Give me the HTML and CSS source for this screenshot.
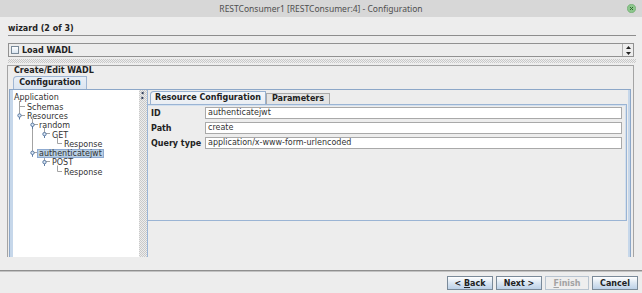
FILE: index.html
```html
<!DOCTYPE html>
<html lang="en">
<head>
    <meta charset="UTF-8">
    <title>RESTConsumer1 [RESTConsumer:4] - Configuration</title>
    <link rel="stylesheet" href="styles.css">
</head>
<body>
    <div class="titlebar">
        <span></span>
        <span class="title">RESTConsumer1 [RESTConsumer:4] - Configuration</span>
        <span class="close">
            <svg width="9" height="9" viewBox="0 0 9 9">
                <circle cx="4.5" cy="4.5" r="4.2" fill="#8cc68c" stroke="#6aa86a" stroke-width="0.6"/>
                <path d="M3 3 L6 6 M6 3 L3 6" stroke="#2f6a2f" stroke-width="1"/>
            </svg>
        </span>
    </div>

    <div class="step">wizard (2 of 3)</div>

    <div class="load">
        <span class="check"></span>
        <span class="load-label">Load WADL</span>
        <span class="spin">
            <svg width="5" height="3" viewBox="0 0 5 3"><path d="M2.5 0 L5 3 L0 3 Z" fill="#222"/></svg>
            <svg width="5" height="3" viewBox="0 0 5 3"><path d="M0 0 L5 0 L2.5 3 Z" fill="#222"/></svg>
        </span>
    </div>

    <div class="hsplit"></div>

    <div class="group">
        <div class="group-title">Create/Edit WADL</div>
        <div class="tabs">
            <span class="tab outer-tab">Configuration</span>
        </div>
        <div class="tab-body">
            <div class="tree">
                <!-- connector lines and expand handles -->
                <svg class="tree-lines" width="126" height="100" viewBox="0 0 126 100">
                    <g stroke="#a3a3a3" stroke-width="1" fill="none">
                        <path d="M6.5 11 V24 M6.5 16.5 H12 M8 25.5 H12"/>
                        <path d="M19.5 29 V62 M21 34.5 H25 M21 62.5 H25"/>
                        <path d="M31.5 38 V43 M33 43.5 H37 M31.5 66 V71 M33 71.5 H37"/>
                        <path d="M44.5 47.5 V53.5 H49 M44.5 75.5 V81.5 H49"/>
                    </g>
                    <g stroke="#4d6e9a" stroke-width="0.9" fill="#d9e6f4">
                        <circle cx="6.5" cy="25.5" r="1.7"/>
                        <circle cx="19.5" cy="34.8" r="1.7"/>
                        <circle cx="19.5" cy="62.8" r="1.7"/>
                        <circle cx="31.5" cy="44.1" r="1.7"/>
                        <circle cx="31.5" cy="72.1" r="1.7"/>
                        <path d="M6.5 27.2 V29.5 M19.5 36.5 V38.8 M19.5 64.5 V66.8 M31.5 45.8 V48 M31.5 73.8 V76" fill="none"/>
                    </g>
                </svg>
                <div class="node lvl0"><span class="label">Application</span></div>
                <div class="node lvl1"><span class="label">Schemas</span></div>
                <div class="node lvl1"><span class="label">Resources</span></div>
                <div class="node lvl2"><span class="label">random</span></div>
                <div class="node lvl3"><span class="label">GET</span></div>
                <div class="node lvl4"><span class="label">Response</span></div>
                <div class="node lvl2"><span class="label selected">authenticatejwt</span></div>
                <div class="node lvl3"><span class="label">POST</span></div>
                <div class="node lvl4"><span class="label">Response</span></div>
            </div>

            <div class="vsplit">
                <svg width="8" height="12" viewBox="0 0 8 12">
                    <path d="M4.5 1.5 L2 3 L4.5 4.5 Z" fill="#1d2d4d"/>
                    <path d="M2.5 6.5 L5 8 L2.5 9.5 Z" fill="#1d2d4d"/>
                </svg>
            </div>

            <div class="detail">
                <div class="tabs inner-tabs">
                    <span class="tab inner-tab selected">Resource Configuration</span>
                    <span class="tab inner-tab">Parameters</span>
                </div>
                <div class="panel">
                    <div class="form">
                        <span class="form-label">ID</span>
                        <span class="field">authenticatejwt</span>
                        <span class="form-label">Path</span>
                        <span class="field">create</span>
                        <span class="form-label">Query type</span>
                        <span class="field">application/x-www-form-urlencoded</span>
                    </div>
                </div>
            </div>
        </div>
    </div>

    <div class="footer">
        <button class="btn">&lt; <u>B</u>ack</button>
        <button class="btn">Next &gt;</button>
        <button class="btn" disabled><u>F</u>inish</button>
        <button class="btn">Cancel</button>
    </div>
</body>
</html>
```

FILE: styles.css
```css
* {
    box-sizing: border-box;
}
body {
    margin: 0;
    width: 642px;
    height: 293px;
    overflow: hidden;
    background-color: #ededed;
    font-family: "DejaVu Sans", sans-serif;
    font-size: 8px;
    color: #333;
}
.titlebar {
    height: 17px;
    background-color: #d7d7d7;
    display: grid;
    grid-template-columns: 1fr auto 1fr;
    align-items: center;
    font-family: "Noto Sans", sans-serif;
    font-size: 8.5px;
    color: #4f4f4f;
}
.close {
    justify-self: end;
    margin-right: 6px;
    height: 9px;
}
.step {
    margin: 0 6px 0 8px;
    height: 19px;
    padding-top: 6px;
    line-height: 12px;
    border-bottom: 1px solid #8d8d8d;
    font-weight: bold;
    color: #222;
}
.load {
    margin: 7px 8px 0 8px;
    height: 14px;
    border: 1px solid #919191;
    display: flex;
    align-items: center;
}
.check {
    width: 8px;
    height: 8px;
    margin-left: 2px;
    border: 1px solid #7a8a99;
    background: linear-gradient(#ffffff, #d9e5f1);
}
.load-label {
    margin-left: 3px;
    font-weight: bold;
    color: #222;
}
.spin {
    margin-left: auto;
    width: 11px;
    height: 100%;
    border-left: 1px solid #b0b0b0;
    display: flex;
    flex-direction: column;
    justify-content: space-around;
    align-items: center;
}
.spin svg {
    display: block;
}
.hsplit,
.vsplit {
    background: repeating-conic-gradient(#c9c9c9 0 25%, #ededed 0 50%) 0 0 / 2px 2px;
}
.hsplit {
    margin: 2px 6px 0 8px;
    height: 4px;
}
.group {
    margin: 2px 8px 0 7px;
    height: 192px;
    border: 1px solid #a4a4a4;
    border-bottom: none;
    padding: 0 2px 0 1px;
}
.group-title {
    height: 10px;
    line-height: 9px;
    padding-left: 5px;
    font-weight: bold;
    color: #222;
}
.tabs {
    display: flex;
    align-items: flex-end;
}
.tab {
    font-weight: bold;
    color: #222;
    text-align: center;
}
.outer-tab {
    margin-left: 4px;
    width: 74px;
    height: 13px;
    line-height: 12px;
    background: linear-gradient(#e9eff6, #dbe5f0);
    border: 1px solid #9fb6d3;
    border-bottom: none;
    border-top-left-radius: 4px;
}
.tab-body {
    height: 168px;
    border: 1px solid #8ca7c8;
    border-bottom: none;
    padding: 0 2px 0 3px;
    box-shadow: inset 3px 0 #c6d7ea, inset -2px 0 #c6d7ea;
    display: flex;
}
.tree {
    position: relative;
    width: 126px;
    background-color: #fff;
    padding-top: 3.2px;
}
.tree-lines {
    position: absolute;
    left: 0;
    top: 0;
}
.node {
    position: relative;
    height: 9.33px;
    display: flex;
    align-items: center;
    white-space: nowrap;
}
.lvl0 { padding-left: 1px; }
.lvl1 { padding-left: 14px; }
.lvl2 { padding-left: 26px; }
.lvl3 { padding-left: 39px; }
.lvl4 { padding-left: 51px; }
.label {
    margin-left: -2px;
    padding: 0 1px;
    line-height: 7.33px;
    border: 1px solid transparent;
    color: #333;
}
.label.selected {
    background-color: #b8cfe5;
    border-color: #8eaad0;
}
.vsplit {
    width: 8px;
}
.vsplit svg {
    display: block;
}
.detail {
    flex: 1;
    border-left: 1px solid #9cb5d5;
    display: flex;
    flex-direction: column;
}
.inner-tabs {
    height: 14px;
    padding-left: 2px;
}
.inner-tab {
    height: 11px;
    line-height: 10px;
    background-color: #e4e4e4;
    border: 1px solid #a9a9a9;
    border-bottom: none;
    width: 64px;
}
.inner-tab.selected {
    width: 116px;
    height: 13px;
    line-height: 12px;
    background: linear-gradient(#f3f6fa, #eaeef3);
    border-color: #97b1d0;
    border-top-left-radius: 4px;
}
.panel {
    height: 117px;
    margin-right: 1px;
    border: 1px solid #9ab4d4;
    border-left: none;
    box-shadow: inset 0 1px #d3e0ee, inset -1px 0 #d3e0ee;
    padding: 2px 4px 0 3px;
}
.form {
    display: grid;
    grid-template-columns: 54px 1fr;
    grid-auto-rows: 12px;
    row-gap: 3px;
    align-items: center;
}
.form-label {
    font-weight: bold;
    color: #222;
}
.field {
    height: 12px;
    line-height: 10px;
    padding-left: 2px;
    background-color: #fff;
    border: 1px solid #a9a9a9;
    color: #333;
    white-space: nowrap;
}
.footer {
    margin-top: 13px;
    border-top: 1px solid #8f8f8f;
    box-shadow: inset 0 1px #c2c2c2;
    padding: 5px 4px 0 0;
    display: flex;
    justify-content: flex-end;
    gap: 3px;
}
.btn {
    width: 46px;
    height: 14px;
    padding: 0;
    font-family: "DejaVu Sans", sans-serif;
    font-size: 8px;
    font-weight: bold;
    color: #222;
    background: linear-gradient(#ffffff, #dde8f3 45%, #bcd1e7);
    border: 1px solid #7a8a99;
}
.btn:disabled {
    width: 44px;
    color: #a3a3a3;
    background: #eeeeee;
    border-color: #b8c4d0;
}
```
